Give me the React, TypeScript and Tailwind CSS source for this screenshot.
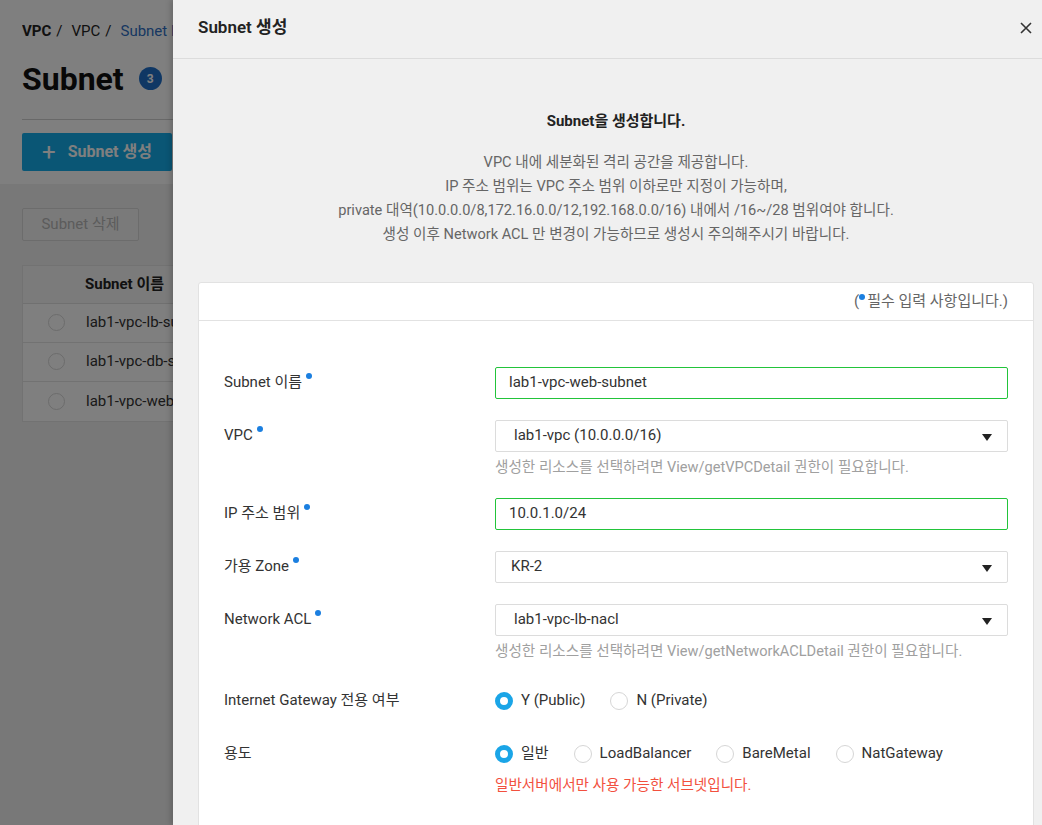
import React from "react";

const font = { fontFamily: "Roboto, 'Noto Sans CJK KR', sans-serif" };

function Dot() {
  return <span className="ml-[4px] inline-block h-[6px] w-[6px] -translate-y-[7px] rounded-full bg-[#1b7fe0]" />;
}

function Radio({ checked, label }: { checked?: boolean; label: string }) {
  return (
    <label className="flex items-center gap-[8px]">
      {checked ? (
        <span className="h-[18px] w-[18px] rounded-full border-[5px] border-[#1aa5e7] bg-white" />
      ) : (
        <span className="h-[18px] w-[18px] rounded-full border border-[#d6d6d6] bg-white" />
      )}
      <span className="text-[15px] text-[#333]">{label}</span>
    </label>
  );
}

function Arrow() {
  return (
    <svg width="10" height="7" viewBox="0 0 10 7" className="absolute right-[15px] top-[13px]">
      <path d="M0 0 L10 0 L5 7 Z" fill="#222" />
    </svg>
  );
}

function Row({ label, required, children }: { label: string; required?: boolean; children: React.ReactNode }) {
  return (
    <div className="mb-[21px] flex">
      <div className="flex h-[32px] w-[271px] shrink-0 items-center text-[15px] text-[#333]">
        {label}
        {required && <Dot />}
      </div>
      <div className="flex-1">{children}</div>
    </div>
  );
}

function TextInput({ value }: { value: string }) {
  return (
    <div className="flex h-[32px] items-center rounded-[2px] border border-[#22c43a] bg-white pl-[13px] text-[15px] text-[#333]">
      {value}
    </div>
  );
}

function Select({ value, pad }: { value: string; pad: string }) {
  return (
    <div className={`relative flex h-[32px] items-center rounded-[2px] border border-[#dcdcdc] bg-white text-[15px] text-[#333] ${pad}`}>
      {value}
      <Arrow />
    </div>
  );
}

function Help({ children }: { children: React.ReactNode }) {
  return <p className="mt-[5px] h-[20px] text-[14.6px] leading-[20px] text-[#a0a0a0]">{children}</p>;
}

export default function App() {
  const rows = ["lab1-vpc-lb-subnet", "lab1-vpc-db-subnet", "lab1-vpc-web-subnet"];
  return (
    <div className="relative h-[825px] w-full overflow-hidden bg-[#f0f0f0]" style={font}>
      {/* page behind the drawer */}
      <div className="bg-white px-[22px] pt-[20px] pb-[13px]">
        <div className="flex w-[151px] items-center overflow-hidden whitespace-nowrap text-[15px] text-[#222]">
          <span className="font-bold">VPC</span>
          <span className="mx-[5px]">/</span>
          <span className="ml-[4px]">VPC</span>
          <span className="mx-[5px]">/</span>
          <span className="ml-[4px] text-[#2f6fc4]">Subnet Management</span>
        </div>
        <div className="mt-[16px] flex items-center">
          <h1 className="text-[32px] font-bold leading-[40px] text-[#111]">Subnet</h1>
          <span className="ml-[15px] flex h-[23px] w-[23px] items-center justify-center rounded-full bg-[#1f6fc9] text-[12px] font-bold text-white">3</span>
        </div>
        <div className="mt-[20px] h-px bg-[#d0d0d0]" />
        <button className="mt-[13px] flex h-[38px] w-[150px] items-center gap-[12px] rounded-[2px] bg-[#14acea] pl-[20px] text-[16px] font-bold text-white">
          <span className="text-[24px] font-normal leading-none">+</span>
          Subnet 생성
        </button>
      </div>
      <div className="px-[22px] pt-[24px]">
        <button className="h-[33px] w-[117px] rounded-[2px] border border-[#d8d8d8] bg-[#f5f5f5] text-[15px] text-[#b8b8b8]">Subnet 삭제</button>
        <div className="mt-[24px] w-[400px] border border-[#e4e4e4] bg-white">
          <div className="flex h-[38px] items-center border-b border-[#e0e0e0] bg-[#f7f7f7] pl-[62px] text-[15px] font-bold text-[#222]">Subnet 이름</div>
          {rows.map((r) => (
            <div key={r} className="flex h-[39px] items-center border-b border-[#e4e4e4] pl-[25px] text-[15px] text-[#333] last:border-b-0">
              <span className="h-[17px] w-[17px] rounded-full border border-[#d8d8d8] bg-white" />
              <span className="ml-[21px]">{r}</span>
            </div>
          ))}
        </div>
      </div>
      <div className="absolute inset-0 bg-black/50" />

      {/* drawer */}
      <div className="absolute inset-y-0 left-[173px] right-0 bg-[#f0f0f0] shadow-[-2px_0_6px_rgba(0,0,0,0.2)]">
        <div className="flex h-[59px] items-center justify-between border-b border-[#dcdcdc] pb-[3px] pl-[25px] pr-[8px]">
          <h2 className="text-[17px] font-semibold text-[#222]">Subnet 생성</h2>
          <svg width="12" height="12" viewBox="0 0 12 12" className="mr-[2px]">
            <path d="M1 1 L11 11 M11 1 L1 11" stroke="#333" strokeWidth="1.6" />
          </svg>
        </div>
        <div className="pl-[25px] pr-[8px]">
          <p className="mt-[51px] text-center text-[15px] font-bold text-[#222]">Subnet을 생성합니다.</p>
          <div className="mt-[17px] text-center text-[14.6px] leading-[24px] text-[#666]">
            <p>VPC 내에 세분화된 격리 공간을 제공합니다.</p>
            <p>IP 주소 범위는 VPC 주소 범위 이하로만 지정이 가능하며,</p>
            <p>private 대역(10.0.0.0/8,172.16.0.0/12,192.168.0.0/16) 내에서 /16~/28 범위여야 합니다.</p>
            <p>생성 이후 Network ACL 만 변경이 가능하므로 생성시 주의해주시기 바랍니다.</p>
          </div>
          <div className="mt-[36px] rounded-[3px] border border-[#e2e2e2] bg-white">
            <div className="flex h-[38px] items-center justify-end border-b border-[#e2e2e2] pr-[25px] text-[15px] text-[#666]">
              (<span className="mr-[2px] inline-block h-[6px] w-[6px] -translate-y-[4px] rounded-full bg-[#1b7fe0]" />필수 입력 사항입니다.)
            </div>
            <div className="px-[25px] pt-[46px] pb-[40px]">
              <Row label="Subnet 이름" required>
                <TextInput value="lab1-vpc-web-subnet" />
              </Row>
              <Row label="VPC" required>
                <Select value="lab1-vpc (10.0.0.0/16)" pad="pl-[18px]" />
                <Help>생성한 리소스를 선택하려면 View/getVPCDetail 권한이 필요합니다.</Help>
              </Row>
              <Row label="IP 주소 범위" required>
                <TextInput value="10.0.1.0/24" />
              </Row>
              <Row label="가용 Zone" required>
                <Select value="KR-2" pad="pl-[15px]" />
              </Row>
              <Row label="Network ACL" required>
                <Select value="lab1-vpc-lb-nacl" pad="pl-[18px]" />
                <Help>생성한 리소스를 선택하려면 View/getNetworkACLDetail 권한이 필요합니다.</Help>
              </Row>
              <div className="pt-[3px]">
                <Row label="Internet Gateway 전용 여부">
                  <div className="flex h-[32px] items-center gap-[25px]">
                    <Radio checked label="Y (Public)" />
                    <Radio label="N (Private)" />
                  </div>
                </Row>
              </div>
              <Row label="용도">
                <div className="flex h-[32px] items-center gap-[25px]">
                  <Radio checked label="일반" />
                  <Radio label="LoadBalancer" />
                  <Radio label="BareMetal" />
                  <Radio label="NatGateway" />
                </div>
                <p className="mt-[5px] text-[14.6px] leading-[20px] text-[#f2503e]">일반서버에서만 사용 가능한 서브넷입니다.</p>
              </Row>
            </div>
          </div>
        </div>
      </div>
    </div>
  );
}
